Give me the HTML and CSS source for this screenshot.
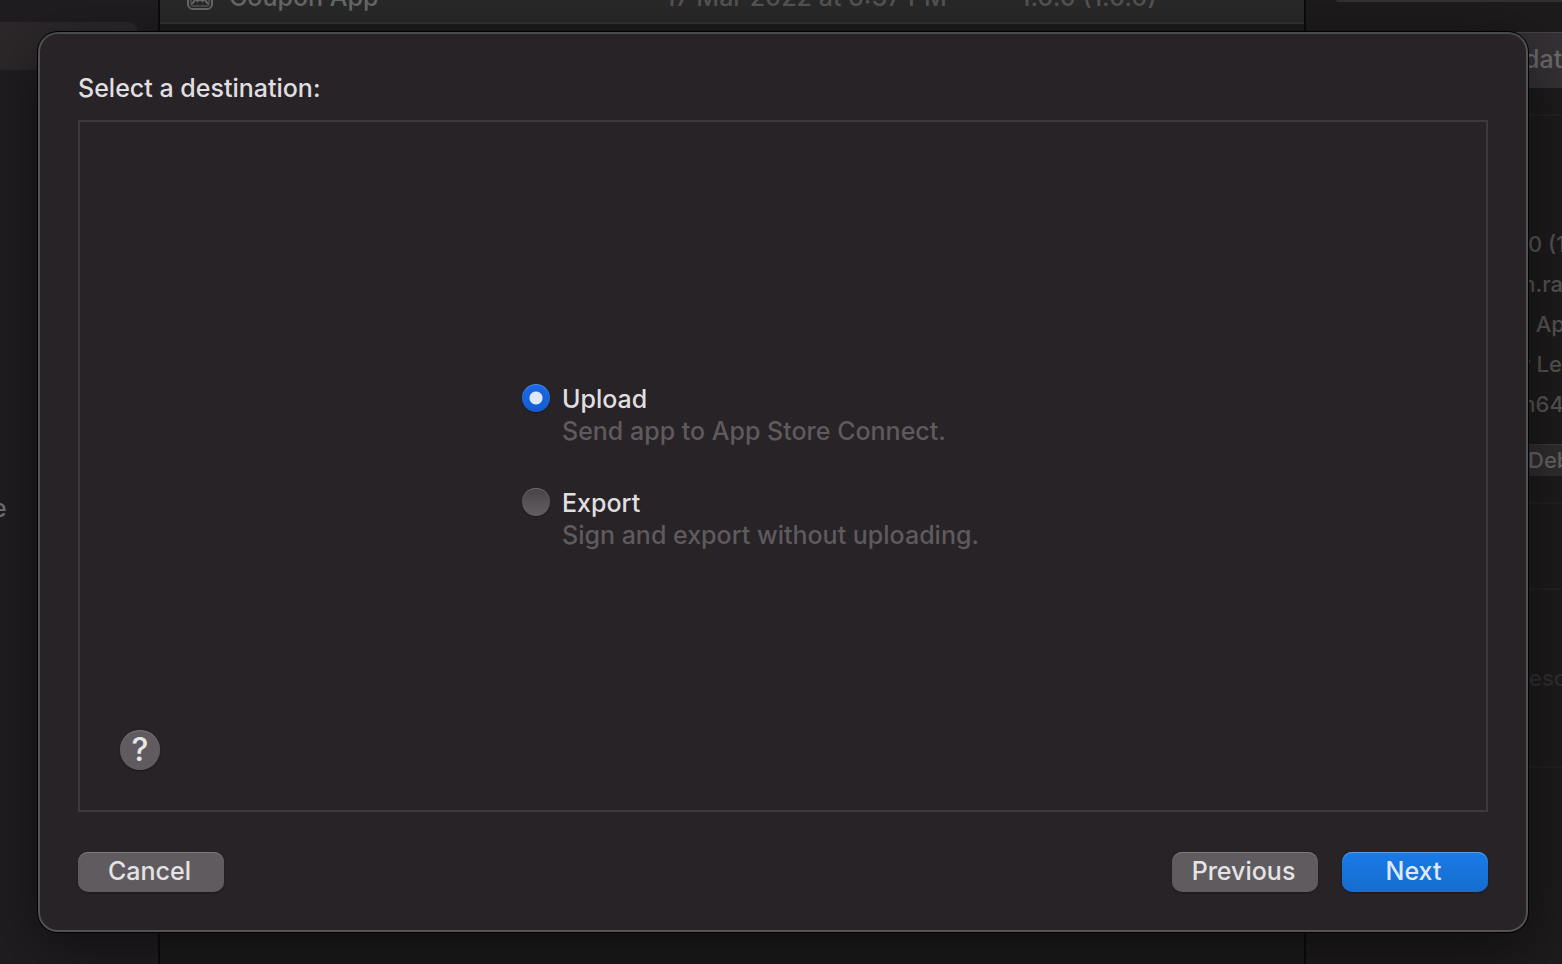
FILE: index.html
```html
<!DOCTYPE html>
<html lang="en">
<head>
    <meta charset="UTF-8">
    <meta name="viewport" content="width=device-width, initial-scale=1.0">
    <title>Select a destination</title>
    <link rel="stylesheet" href="styles.css">
</head>
<body>
    <div class="organizer">
        <div class="sidebar">
            <div class="sidebar-selected"></div>
            <p class="sidebar-item">e</p>
        </div>
        <div class="archives">
            <div class="archive-row">
                <span class="archive-name">
                    <svg class="archive-icon" width="26" height="26" viewBox="0 0 26 26" fill="none" stroke="currentColor" stroke-width="2">
                        <rect x="1" y="1" width="24" height="24" rx="5"/>
                        <rect x="4" y="4" width="18" height="18" rx="2" stroke-width="1"/>
                        <path d="M5 20l3-4v-4M21 20l-3-4v-4M8 16h10M10 18l2-4M16 18l-2-4"/>
                    </svg>
                    Coupon App
                </span>
                <span class="archive-date">17 Mar 2022 at 6:37 PM</span>
                <span class="archive-version">1.0.0 (1.0.0)</span>
            </div>
        </div>
        <div class="inspector">
            <div class="inspector-top"></div>
            <div class="inspector-button">dat</div>
            <div class="details">
                <p>0 (1</p>
                <p>m.ra</p>
                <p>s Ap</p>
                <p>y Le</p>
                <p>m64</p>
            </div>
            <div class="debug-button">Deb</div>
            <div class="section"></div>
            <div class="section description">esc</div>
            <div class="section"></div>
        </div>
    </div>

    <form class="dialog" role="dialog" aria-labelledby="dialog-title">
        <h1 class="title" id="dialog-title">Select a destination:</h1>
        <div class="box">
            <div class="options">
                <div class="option">
                    <input type="radio" name="destination" id="upload" checked>
                    <div>
                        <label for="upload">Upload</label>
                        <p>Send app to App Store Connect.</p>
                    </div>
                </div>
                <div class="option">
                    <input type="radio" name="destination" id="export">
                    <div>
                        <label for="export">Export</label>
                        <p>Sign and export without uploading.</p>
                    </div>
                </div>
            </div>
            <button type="button" class="help">?</button>
        </div>
        <div class="buttons">
            <button type="button" class="btn cancel">Cancel</button>
            <button type="button" class="btn">Previous</button>
            <button type="button" class="btn next">Next</button>
        </div>
    </form>
</body>
</html>
```
FILE: styles.css
```css
* {
    box-sizing: border-box;
}
body {
    margin: 0;
    background: #1b191a;
    color: #e0dfe0;
    font-family: Inter, Roboto, "Liberation Sans", sans-serif;
    font-size: 25px;
    font-weight: 500;
    line-height: 32px;
    overflow: hidden;
}
p {
    margin: 0;
}

/* window behind the dialog */
.organizer {
    display: grid;
    grid-template-columns: 160px 1fr 258px;
    height: 100vh;
    color: #555354;
}
.sidebar {
    background: #201d20;
    border-right: 2px solid #0c0b0c;
    padding-top: 22px;
    overflow: hidden;
}
.sidebar-selected {
    width: 138px;
    height: 48px;
    background: #2c2829;
    border-radius: 0 10px 10px 0;
}
.sidebar-item {
    margin-top: 422px;
    margin-left: -8px;
    color: #716f70;
}
.archives {
    background: #1c1b1b;
    overflow: hidden;
}
/* scrolled partly out of the list */
.archive-row {
    display: grid;
    grid-template-columns: 436px 355px 1fr;
    align-items: center;
    height: 52px;
    margin-top: -28px;
    padding-left: 69px;
    background: #292929;
    border-bottom: 2px solid #323131;
    white-space: nowrap;
}
.archive-name {
    display: flex;
    align-items: center;
    gap: 16px;
    margin-left: -42px;
    color: #686868;
}
.inspector {
    background: #1d1b1b;
    border-left: 2px solid #0c0b0c;
    overflow: hidden;
    white-space: nowrap;
    font-size: 22px;
}
.inspector-top {
    height: 2px;
    margin-left: 30px;
    background: #343134;
    border-radius: 0 0 0 8px;
}
.inspector-button {
    height: 56px;
    margin-top: 30px;
    padding: 10px 0 0 218px;
    background: #353135;
    border-top: 1px solid #454346;
    color: #6c6a6c;
    font-size: 25px;
}
.details {
    margin-top: 26px;
    padding-top: 108px;
    border-top: 2px solid #232122;
    line-height: 40px;
}
.details p {
    padding-left: 222px;
}
.details p:nth-child(2),
.details p:nth-child(5) {
    padding-left: 210px;
}
.details p:nth-child(3),
.details p:nth-child(4) {
    padding-left: 212px;
}
.debug-button {
    height: 32px;
    margin: 20px 0 26px;
    padding-left: 222px;
    background: #302d2f;
    border-top: 1px solid #3b383a;
    color: #666465;
    line-height: 30px;
}
.section {
    height: 86px;
    border-top: 2px solid #232222;
}
.description {
    height: 178px;
    padding: 72px 0 0 223px;
    color: #302f30;
}

/* dialog */
.dialog {
    position: absolute;
    inset: 32px 34px 32px 38px;
    display: flex;
    flex-direction: column;
    padding: 38px;
    background: #282327;
    border: 2px solid #555154;
    border-top-color: #4a4a4c;
    border-radius: 20px;
    box-shadow: 0 0 0 1px #000, 0 16px 60px rgba(0, 0, 0, 0.5);
}
.title {
    margin: 0 0 16px;
    font-size: 25px;
    font-weight: 500;
}
.box {
    flex: 1;
    display: grid;
    padding: 42px 40px 40px;
    border: 2px solid #3d393c;
}
.options {
    grid-area: 1 / 1;
    place-self: center;
    display: flex;
    flex-direction: column;
    gap: 40px;
    width: 522px;
}
.option {
    display: flex;
    gap: 12px;
}
.option label {
    display: block;
}
.option p {
    color: #5e5a5d;
}
.option input {
    appearance: none;
    flex: none;
    width: 28px;
    height: 28px;
    margin: 1px 0 0;
    border-radius: 50%;
    background: linear-gradient(#474246, #636063);
    box-shadow: inset 0 1px #6a676a, 0 1px 1px #1c181b;
}
.option input:checked {
    background: radial-gradient(circle, #dfe8fb 6px, transparent 7px), linear-gradient(#1b6ae8, #145bcd);
    box-shadow: inset 0 1px #5590ed, 0 1px 1px #1c181b;
}
.help {
    grid-area: 1 / 1;
    place-self: end start;
    width: 40px;
    height: 40px;
    padding: 0;
    border: 0;
    border-radius: 50%;
    background: #5f5b5f;
    box-shadow: inset 0 1px #757175, 0 1px 2px #1c181b;
    color: #e8e7e8;
    font-family: inherit;
    font-size: 32px;
    font-weight: 500;
    line-height: 40px;
}
.buttons {
    display: flex;
    gap: 24px;
    margin-top: 40px;
}
.btn {
    width: 146px;
    height: 40px;
    padding: 0 3px 2px 0;
    border: 0;
    border-radius: 10px;
    background: #5f5b5f;
    box-shadow: inset 0 1px #7c797c, 0 1px 2px #1c181b;
    color: #e5e4e5;
    font-family: inherit;
    font-size: 25px;
    font-weight: 500;
}
.cancel {
    margin-right: auto;
}
.next {
    background: linear-gradient(#1a7ae8, #156dcd);
    box-shadow: inset 0 1px #589ff0, 0 1px 2px #1c181b;
    color: #dde9fb;
}
```
